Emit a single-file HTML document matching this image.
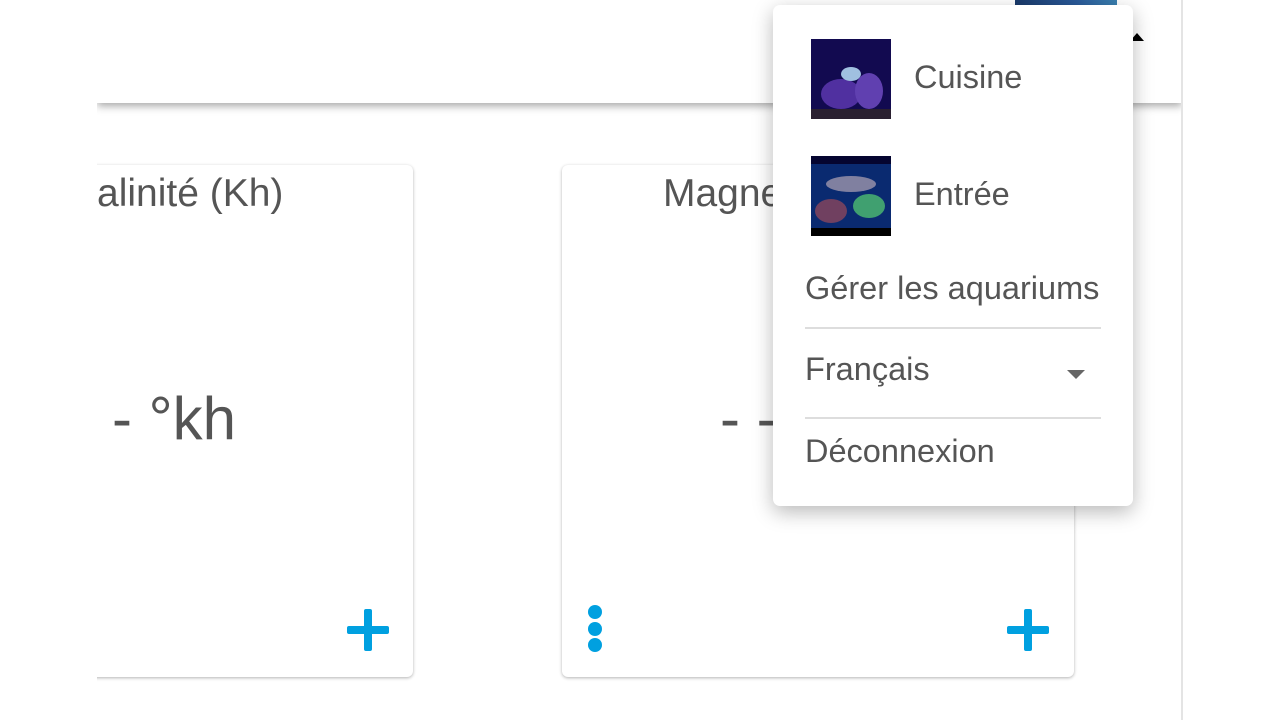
<!DOCTYPE html>
<html><head><meta charset="utf-8"><style>
*{margin:0;padding:0;box-sizing:border-box}
body{width:1280px;height:720px;overflow:hidden;background:#fff;font-family:"Liberation Sans",Arial,sans-serif;color:#555;position:relative}
.abs{position:absolute}
.clip{position:absolute;left:97px;top:0;width:1085px;height:720px;overflow:hidden}
.card{position:absolute;background:#fff;border-radius:6px;box-shadow:0 1px 3px rgba(0,0,0,.3);height:512px;width:512px;top:165px}
.title{position:absolute;top:7px;font-size:39px;white-space:nowrap}
.val{position:absolute;font-size:60px;white-space:nowrap}
.plus{position:absolute;width:42px;height:42px}
.plus:before{content:"";position:absolute;left:17px;top:0;width:8px;height:42px;background:#00a0e0;border-radius:2px}
.plus:after{content:"";position:absolute;left:0;top:17px;width:42px;height:8px;background:#00a0e0;border-radius:2px}
.dot{position:absolute;width:14px;height:14px;border-radius:50%;background:#00a0e0}
.menu{position:absolute;left:773px;top:5px;width:360px;height:501px;background:#fff;border-radius:7px;box-shadow:0 6px 20px rgba(0,0,0,.28)}
.mi{position:absolute;font-size:32.5px;white-space:nowrap}
.hr{position:absolute;left:32px;width:296px;height:2px;background:#ddd}
</style></head><body>
<div class="clip">
 <div class="abs" style="left:0;top:0;width:1085px;height:103px;background:#fff;box-shadow:0 3px 8px rgba(0,0,0,.35)"></div>
 <div class="abs" style="left:918px;top:0;width:102px;height:6px;background:linear-gradient(90deg,#1a3a6a,#2a5a9a 60%,#3a80b0)"></div>
 <div class="abs" style="left:1033px;top:33px;width:0;height:0;border-left:7px solid transparent;border-right:7px solid transparent;border-bottom:8px solid #000"></div>
 <div class="card" style="left:-196px">
  <div class="title" style="left:196px">alinité (Kh)</div>
  <div class="val" style="left:211px;top:219px">- °kh</div>
  <div class="plus" style="left:446px;top:444px"></div>
 </div>
 <div class="card" style="left:465px">
  <div class="title" style="left:101px">Magnesium</div>
  <div class="val" style="left:158px;top:219px">- -</div>
  <div class="dot" style="left:26px;top:440px"></div>
  <div class="dot" style="left:26px;top:457px"></div>
  <div class="dot" style="left:26px;top:473px"></div>
  <div class="plus" style="left:445px;top:444px"></div>
 </div>
</div>
<div class="abs" style="left:1181px;top:0;width:2px;height:720px;background:#e4e4e4"></div>
<div class="menu">
 <svg class="abs" style="left:38px;top:34px" width="80" height="80"><rect width="80" height="80" fill="#120a50"/><rect y="70" width="80" height="10" fill="#2a2030"/><ellipse cx="30" cy="55" rx="20" ry="15" fill="#5030a0"/><ellipse cx="58" cy="52" rx="14" ry="18" fill="#6040b0"/><ellipse cx="40" cy="35" rx="10" ry="7" fill="#a0c0e0"/></svg>
 <div class="mi" style="left:141px;top:54px">Cuisine</div>
 <svg class="abs" style="left:38px;top:151px" width="80" height="80"><rect width="80" height="80" fill="#0a2a70"/><rect y="0" width="80" height="8" fill="#050530"/><rect y="72" width="80" height="8" fill="#000"/><ellipse cx="20" cy="55" rx="16" ry="12" fill="#704060"/><ellipse cx="58" cy="50" rx="16" ry="12" fill="#40a070"/><ellipse cx="40" cy="28" rx="25" ry="8" fill="#8080a0"/></svg>
 <div class="mi" style="left:141px;top:171px">Entrée</div>
 <div class="mi" style="left:32px;top:265px">Gérer les aquariums</div>
 <div class="hr" style="top:322px"></div>
 <div class="mi" style="left:32px;top:346px">Français</div>
 <div class="abs" style="left:294px;top:365px;width:0;height:0;border-left:9px solid transparent;border-right:9px solid transparent;border-top:9px solid #666"></div>
 <div class="hr" style="top:412px"></div>
 <div class="mi" style="left:32px;top:428px">Déconnexion</div>
</div>
</body></html>
